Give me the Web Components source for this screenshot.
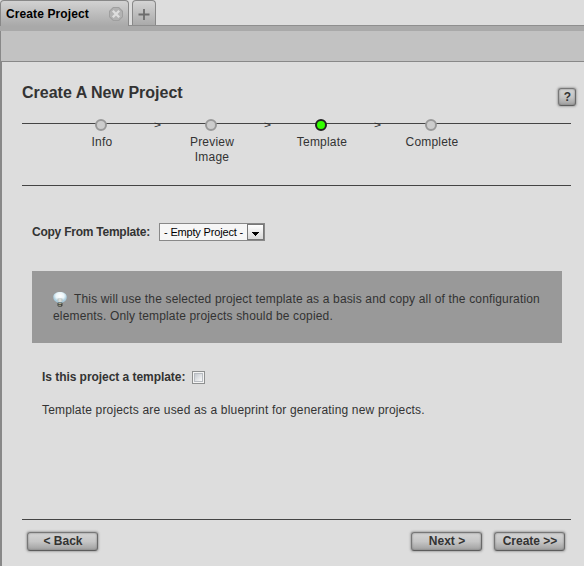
<!DOCTYPE html>
<html lang="en"><head><meta charset="utf-8"><title>Create Project</title>
<style>
html,body{margin:0;height:100%}
body{background:#ddd;overflow:hidden;color:#333;font:12px/15px "Liberation Sans",Arial,sans-serif}
</style></head><body>
<project-window></project-window>
<script>
const define=(name,html)=>customElements.define(name,class extends HTMLElement{
  constructor(){super();this.attachShadow({mode:'open'}).innerHTML=html;}
});

define('tab-bar',`<style>
:host{display:flex;height:31px;box-sizing:border-box;background:linear-gradient(#ddd 25px,#8e8e8e 25px,#8e8e8e 26px,#a9a9a9 26px)}
.tab{box-sizing:border-box;display:flex;align-items:center;border:1px solid #888;border-bottom:0;border-radius:4px 4px 0 0}
.active{width:129px;height:26px;padding:0 5px 0 5px;justify-content:space-between;color:#000;font-weight:bold;background:linear-gradient(#d2d2d2,#a9a9a9)}
.active span{padding-top:2px;letter-spacing:.1px}
.add{width:24px;height:25px;margin-left:3px;padding-top:3px;justify-content:center;background:linear-gradient(#d4d4d4,#aaa)}
svg{display:block}
</style>
<div class="tab active"><span><slot></slot></span>
<svg width="14" height="14" viewBox="0 0 14 14"><path d="M4 0H10L14 4V10L10 14H4L0 10V4Z" fill="#9f9f9f"/><path d="M4.5 1H9.5L13 4.5V9.5L9.5 13H4.5L1 9.5V4.5Z" fill="#b2b2b2"/><path d="M3.8 3.8L10.2 10.2M10.2 3.8L3.8 10.2" stroke="#dedede" stroke-width="2.3"/></svg></div>
<div class="tab add"><svg width="12" height="12" viewBox="0 0 12 12"><path d="M6 0V11M.5 5.5H11.5" stroke="#6d6d6d" stroke-width="1.8"/></svg></div>`);

define('step-item',`<style>
:host{display:block;width:110px;text-align:center;color:#333}
.dot{box-sizing:border-box;width:12px;height:12px;margin:0 auto 4px;border:2px solid #999;border-radius:50%;background:#ccc;position:relative;left:-1px}
:host([current]) .dot{background:#3f0;border-color:#222}
.label{width:60px;margin:0 auto;letter-spacing:.2px}
</style><div class="dot"></div><div class="label"><slot></slot></div>`);

define('step-list',`<style>
:host{display:flex;height:67px;box-sizing:border-box;padding-left:25px;border-bottom:1px solid #444;background:linear-gradient(#444,#444) 0 4px/100% 1px no-repeat}
.arrow{width:0;display:flex;justify-content:center;font:9px/12px "Liberation Sans",Arial,sans-serif;color:#222}
.arrow i{font-style:normal;height:12px;transform:translateX(1px) scaleX(1.35)}
</style>
<step-item>Info</step-item><span class="arrow"><i>&gt;</i></span>
<step-item>Preview Image</step-item><span class="arrow"><i>&gt;</i></span>
<step-item current>Template</step-item><span class="arrow"><i>&gt;</i></span>
<step-item>Complete</step-item>`);

define('push-button',`<style>
:host{display:block;width:71px;height:19px}
button{box-sizing:border-box;width:100%;height:100%;display:flex;align-items:center;justify-content:center;padding:0 0 0 1px;border:1px solid #666;border-color:#777 #696969 #5d5d5d #777;border-radius:3px;background:linear-gradient(#d4d4d4,#c6c6c6 50%,#a0a0a0);box-shadow:0 0 2px 1px #aaa,inset 0 0 2px #777;color:#333;font:bold 12px/15px "Liberation Sans",Arial,sans-serif;white-space:nowrap}
</style><button><slot></slot></button>`);

define('select-box',`<style>
:host{display:flex;box-sizing:border-box;width:106px;height:18px;border:1px solid #888;background:#f6f6f6;color:#000;font:11px/16px "Liberation Sans",Arial,sans-serif;letter-spacing:-.17px}
span{flex:1;padding-left:4px;white-space:nowrap}
.drop{box-sizing:border-box;width:17px;height:16px;border:1px solid #777;background:linear-gradient(#fff,#d8d8d8);display:flex;align-items:center;justify-content:center}
</style><span><slot></slot></span><div class="drop"><svg width="7" height="4" viewBox="0 0 7 4" style="margin-top:3px" shape-rendering="crispEdges"><path d="M0 0H7L3.5 4Z"/></svg></div>`);

define('check-box',`<style>
:host{display:block;box-sizing:border-box;width:13px;height:13px;border:1px solid #8d8f8f;padding:1px;background:#f4f4f4}
div{box-sizing:border-box;width:9px;height:9px;border:1px solid #b8bcc1;background:linear-gradient(135deg,#c5c9cf,#fafafa)}
</style><div></div>`);

define('info-note',`<style>
:host{display:block;box-sizing:border-box;height:72px;padding:20px 20px 0 21px;background:#999;line-height:17px;letter-spacing:.155px;white-space:nowrap}
svg{display:inline-block;vertical-align:-4px;margin-right:7px}
</style><svg width="14" height="15" viewBox="0 0 14 15"><defs><radialGradient id="g" cx=".5" cy=".35"><stop offset="0" stop-color="#fff"/><stop offset=".6" stop-color="#eaf5f9"/><stop offset="1" stop-color="#a9cbdc"/></radialGradient></defs><path d="M7 0C3 0 .2 2 .2 5C.2 7.8 2.3 9.5 4 10.2V11H10V10.2C12 9.5 13.8 7.8 13.8 5C13.8 2 11 0 7 0Z" fill="url(#g)"/><path d="M4.5 6.5H9.5V9.5H4.5Z" fill="#b4bcbc"/><path d="M5.5 7H8.5V10H5.5Z" fill="#d7dcd9"/><path d="M4.5 10.5H9.5V13.5L8.5 14.7H5.5L4.5 13.5Z" fill="#454846"/><path d="M5.5 11.5H8.5M5.5 13.3H8" stroke="#c7c4a0" stroke-width=".8"/></svg><slot></slot>`);

define('project-window',`<style>
:host{display:flex;flex-direction:column;height:566px}
.toolbar{box-sizing:border-box;height:31px;background:#c2c2c2;border-left:1px solid #888;border-bottom:1px solid #888}
main{flex:1;box-sizing:border-box;border-left:2px solid #888;padding:20px 13px 0 20px;display:flex;flex-direction:column}
header{display:flex;justify-content:space-between;height:37px;margin-right:-5px}
h1{margin:1px 0 0;font:bold 16px/20px "Liberation Sans",Arial,sans-serif}
header push-button{width:18px;height:18px;margin-top:6px}
.row{display:flex;align-items:center}
.copy{margin:37px 0 0 10px;height:18px;gap:9px}
.copy b{letter-spacing:-.24px;width:118px;white-space:nowrap}
info-note{margin:30px 9px 0 10px}
.flag{margin:27px 0 0 20px;height:15px;gap:7px}
.flag b{letter-spacing:-.05px}
p{margin:18px 0 0 20px;letter-spacing:.17px}
footer{display:flex;gap:12px;margin-top:auto;border-top:1px solid #444;padding:12px 6px 15px 5px;height:19px}
.gap{flex:1}
</style>
<tab-bar>Create Project</tab-bar><div class="toolbar"></div>
<main><header><h1>Create A New Project</h1><push-button>?</push-button></header>
<step-list></step-list>
<div class="row copy"><b>Copy From Template:</b><select-box>- Empty Project -</select-box></div>
<info-note>This will use the selected project template as a basis and copy all of the configuration<br>elements. Only template projects should be copied.</info-note>
<div class="row flag"><b>Is this project a template:</b><check-box></check-box></div>
<p>Template projects are used as a blueprint for generating new projects.</p>
<footer><push-button>&lt; Back</push-button><div class="gap"></div><push-button>Next &gt;</push-button><push-button>Create &gt;&gt;</push-button></footer>
</main>`);
</script></body></html>
